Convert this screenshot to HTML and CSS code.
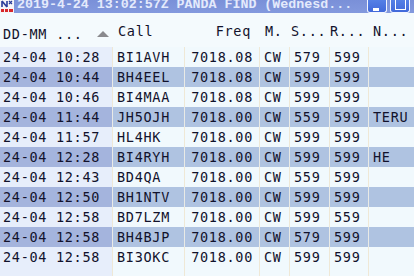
FILE: index.html
```html
<!DOCTYPE html>
<html lang="en">
    <head>
        <meta charset="UTF-8" />
        <meta name="viewport" content="width=device-width, initial-scale=1.0" />
        <title>PANDA FIND</title>
        <link rel="stylesheet" href="styles.css">
    </head>
    <body>
        <div class="window">
            <div class="titlebar">
                <svg class="app-icon" width="14" height="13" viewBox="0 0 14 13">
                    <rect x="0" y="0" width="14" height="13" fill="#f4f4f8" />
                    <path d="M2 1 L2 7 M2 1 L7 7 M7 1 L7 7" stroke="#2a3c9a" stroke-width="1.6" fill="none" />
                    <path d="M9 1 L12 4 M12 1 L9 4" stroke="#2a3c9a" stroke-width="1.2" />
                    <rect x="1" y="9" width="12" height="3" fill="#d8262a" />
                    <rect x="4" y="9" width="1" height="3" fill="#f4f4f8" />
                    <rect x="8" y="9" width="1" height="3" fill="#f4f4f8" />
                </svg>
                <span class="title">2019-4-24 13:02:57Z PANDA FIND (Wednesd...</span>
                <div class="win-btn min"><span></span></div>
                <div class="win-btn max"><span></span></div>
            </div>

            <div class="list">
                <div class="row head">
                    <div class="cell first">
                        <span>DD-MM</span>
                        <span class="dots">...</span>
                        <span class="sort-arrow"></span>
                    </div>
                    <div class="cell call">Call</div>
                    <div class="cell freq">Freq</div>
                    <div class="cell mode">M.</div>
                    <div class="cell sent">S...</div>
                    <div class="cell rcvd">R...</div>
                    <div class="cell note">N...</div>
                </div>

                <div id="rows"></div>

                <div class="row filler">
                    <div class="cell first"></div>
                    <div class="cell"></div>
                    <div class="cell"></div>
                    <div class="cell"></div>
                    <div class="cell"></div>
                    <div class="cell"></div>
                    <div class="cell"></div>
                </div>
            </div>
        </div>

        <script>
            let qsos = [
                ["24-04 10:28", "BI1AVH", "7018.08", "CW", "579", "599", ""],
                ["24-04 10:44", "BH4EEL", "7018.08", "CW", "599", "599", ""],
                ["24-04 10:46", "BI4MAA", "7018.08", "CW", "599", "599", ""],
                ["24-04 11:44", "JH5OJH", "7018.00", "CW", "559", "599", "TERU"],
                ["24-04 11:57", "HL4HK", "7018.00", "CW", "599", "599", ""],
                ["24-04 12:28", "BI4RYH", "7018.00", "CW", "599", "599", "HE"],
                ["24-04 12:43", "BD4QA", "7018.00", "CW", "559", "599", ""],
                ["24-04 12:50", "BH1NTV", "7018.00", "CW", "599", "599", ""],
                ["24-04 12:58", "BD7LZM", "7018.00", "CW", "599", "559", ""],
                ["24-04 12:58", "BH4BJP", "7018.00", "CW", "579", "599", ""],
                ["24-04 12:58", "BI3OKC", "7018.00", "CW", "599", "599", ""]
            ];
            let names = ["first", "call", "freq", "mode", "sent", "rcvd", "note"];
            let data = "";
            for (var i = 0; i < qsos.length; i++) {
                data += '<div class="row' + (i % 2 ? " odd" : "") + '">';
                for (var j = 0; j < names.length; j++) {
                    data += '<div class="cell ' + names[j] + '">' + qsos[i][j] + "</div>";
                }
                data += "</div>";
            }
            document.getElementById("rows").innerHTML = data;
        </script>
    </body>
</html>
```

FILE: styles.css
```css
* {
    box-sizing: border-box;
}
body {
    margin: 0;
    background: #f1f9fd;
    overflow: hidden;
}
.window {
    width: 414px;
    height: 276px;
    overflow: hidden;
}

/* title bar (top part is off screen) */
.titlebar {
    height: 13px;
    display: flex;
    align-items: flex-start;
    background: linear-gradient(#7a90d8, #8399de);
    overflow: hidden;
}
.app-icon {
    flex: none;
    display: block;
    margin-right: 3px;
}
.title {
    flex: 1;
    margin-top: -1px;
    font-family: "Liberation Mono", monospace;
    font-weight: bold;
    font-size: 13.3px;
    line-height: 12px;
    color: #e4eafc;
    white-space: nowrap;
    overflow: hidden;
}
.win-btn {
    flex: none;
    position: relative;
    width: 20px;
    height: 13px;
    margin-right: 3px;
    border: 1px solid #f2f5ff;
    border-top: none;
    border-radius: 0 0 3px 3px;
    background: linear-gradient(#5580e6, #4169da);
}
.win-btn.max {
    margin-right: 4px;
}
.win-btn.min span {
    position: absolute;
    left: 5px;
    top: 8px;
    width: 6px;
    height: 3px;
    background: #fff;
}
.win-btn.max span {
    position: absolute;
    left: 4px;
    top: 0;
    width: 11px;
    height: 10px;
    border: 1px solid #fff;
    border-top: none;
}

/* list view */
.list {
    font-family: "DejaVu Sans Mono", monospace;
    font-size: 13.5px;
    letter-spacing: 0.7px;
    color: #12122c;
}
.row {
    display: grid;
    grid-template-columns: 112px 72px 75px 30px 40px 39px 60px;
    height: 20px;
    line-height: 20px;
    white-space: nowrap;
}
.cell {
    padding-left: 4px;
    border-left: 1px solid #efe8d6;
    background: #f1f9fd;
    overflow: hidden;
}
.cell.first {
    padding-left: 3px;
    border-left: none;
    background: #e7eefb;
}
.cell.freq {
    padding-left: 0;
    padding-right: 6px;
    text-align: right;
}
.row.odd .cell {
    background: #afc3e1;
    border-left-color: #e9eae6;
}
.row.odd .cell.first {
    background: #a4b4dd;
}

.row.head {
    height: 34px;
    padding-top: 8px;
    background: #f4fafd;
}
.row.head .cell {
    border-left: none;
    background: none;
}
.row.head .cell.first {
    display: flex;
    align-items: center;
}
.row.head .call {
    padding-left: 6px;
}
.row.head .freq {
    padding-right: 8px;
}
.row.head .mode {
    padding-left: 6px;
}
.row.head .sent {
    padding-left: 2px;
}
.row.head .rcvd {
    padding-left: 1px;
}
.row.head .note {
    padding-left: 5px;
}
.dots {
    margin-left: 9px;
}
.sort-arrow {
    margin-left: 14px;
    margin-top: -1px;
    width: 0;
    height: 0;
    border-left: 6px solid transparent;
    border-right: 6px solid transparent;
    border-bottom: 6px solid #8a8a8e;
}
.row.filler {
    height: 12px;
}
```
